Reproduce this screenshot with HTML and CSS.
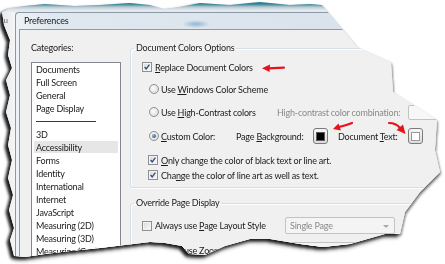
FILE: index.html
```html
<!DOCTYPE html>
<html>
<head>
    <title>Preferences</title>
    <link rel="stylesheet" href="styles.css">
</head>
<body>
<div class="page">
  <div class="sheet">
    <div class="bgwin">cu</div>
    <div class="dialog">
      <div class="titlebar">Preferences</div>
      <div class="client">
        <div class="cats">
          <div class="cats-label">Categories:</div>
          <ul class="listbox">
            <li>Documents</li>
            <li>Full Screen</li>
            <li>General</li>
            <li>Page Display</li>
            <li class="sep"><hr></li>
            <li>3D</li>
            <li class="sel">Accessibility</li>
            <li>Forms</li>
            <li>Identity</li>
            <li>International</li>
            <li>Internet</li>
            <li>JavaScript</li>
            <li>Measuring (2D)</li>
            <li>Measuring (3D)</li>
            <li>Measuring (Geo)</li>
          </ul>
        </div>
        <div class="panel">
          <fieldset class="group group-colors">
            <legend>Document Colors Options</legend>
            <div class="row row-replace">
              <span class="check on"><svg viewBox="0 0 10 10"><path d="M2 5 L4 7.5 L8 2"/></svg></span>
              <span><u>R</u>eplace Document Colors</span>
            </div>
            <div class="row row-sub row-win">
              <span class="radio"></span>
              <span>Use <u>W</u>indows Color Scheme</span>
            </div>
            <div class="row row-sub row-hc">
              <span class="radio"></span>
              <span class="opt-hc">Use <u>H</u>igh-Contrast colors</span>
              <span class="muted">High-contrast color combination:</span>
              <span class="combo combo-hc"></span>
            </div>
            <div class="row row-sub row-custom">
              <span class="radio on"></span>
              <span class="opt-custom"><u>C</u>ustom Color:</span>
              <span class="opt-bg">Page <u>B</u>ackground:</span>
              <span class="swatch"><i class="black"></i></span>
              <span class="opt-text">Document <u>T</u>ext:</span>
              <span class="swatch"><i class="white"></i></span>
            </div>
            <div class="row row-sub row-only">
              <span class="check on"><svg viewBox="0 0 10 10"><path d="M2 5 L4 7.5 L8 2"/></svg></span>
              <span><u>O</u>nly change the color of black text or line art.</span>
            </div>
            <div class="row row-sub row-change">
              <span class="check on"><svg viewBox="0 0 10 10"><path d="M2 5 L4 7.5 L8 2"/></svg></span>
              <span>Cha<u>n</u>ge the color of line art as well as text.</span>
            </div>
          </fieldset>
          <fieldset class="group group-override">
            <legend>Override Page Display</legend>
            <div class="row row-layout">
              <span class="check"></span>
              <span class="opt-layout">Always use <u>P</u>age Layout Style</span>
              <span class="combo">Single Page</span>
            </div>
            <div class="row row-zoom">
              <span class="check"></span>
              <span class="opt-layout">Always use <u>Z</u>oom Setting</span>
              <span class="combo">Fit Width</span>
            </div>
          </fieldset>
        </div>
      </div>
    </div>
    <svg class="marks" width="445" height="264" viewBox="0 0 445 264">
      <path d="M284 67.6 L268 68.3"/>
      <polygon points="262,68.2 270,64.4 269.6,72"/>
      <path d="M352 123 Q346 125.5 339 127"/>
      <polygon points="333,129 338.5,123.5 341,130.5"/>
      <path d="M389 123 Q396 123 400 128"/>
      <polygon points="405.5,134 396.5,130 403,124.5"/>
    </svg>
  </div>
</div>
</body>
</html>
```

FILE: styles.css
```css
html, body{
    margin: 0;
    padding: 0;
    background: #fff;
}
body{
    width: 445px;
    height: 264px;
    overflow: hidden;
    font-family: Lato, "Open Sans", sans-serif;
    font-size: 9px;
    letter-spacing: -0.2px;
    color: #1b1b1b;
}
u{
    text-decoration-thickness: 1px;
    text-underline-offset: 1px;
}
.page{
    filter: drop-shadow(-3px 2px 1.5px rgba(0,0,0,.85)) drop-shadow(1px 2px 1px rgba(0,0,0,.45));
}
.sheet{
    position: relative;
    width: 445px;
    height: 264px;
    display: flex;
    padding-top: 12px;
    box-sizing: border-box;
    overflow: hidden;
    background: linear-gradient(#2a7888 0, #2f8494 4px, #b9c9d3 7px, #e3e8ec 10px, #eceef0 30px);
    clip-path: polygon(2px 12px, 10px 8px, 25px 6px, 45px 4px, 75px 6px, 100px 5px, 130px 3px, 150px 5px, 165px 9px, 180px 7px, 200px 3px, 230px 5px, 260px 2px, 290px 5px, 310px 4px, 322px 5px,
        357px 47px, 391px 62px, 393px 92px, 437px 120px, 435px 150px, 440px 172px, 420px 192px, 405px 212px, 400px 234px,
        385px 234px, 350px 244px, 323px 247px, 300px 244px, 270px 239px, 250px 239px, 225px 246px, 205px 255px, 189px 254px, 182px 246px, 165px 243px, 150px 242px, 125px 245px, 100px 248px, 70px 251px, 45px 254px, 25px 257px, 14px 256px,
        10px 240px, 14px 228px, 9px 210px, 13px 195px, 8px 178px, 12px 160px, 8px 145px, 11px 128px, 6px 112px, 10px 95px, 6px 80px, 12px 68px, 8px 55px, 10px 40px, 4px 25px);
}
.bgwin{
    width: 15px;
    flex: none;
    padding-top: 3px;
    color: #6a6a6a;
    font-size: 8px;
    background: linear-gradient(90deg, #e6e8ea, #f4f5f6);
}
.dialog{
    flex: none;
    width: 460px;
    border-left: 1px solid #8c98a5;
    border-top: 1px solid #8c98a5;
    border-top-left-radius: 4px;
    padding-left: 3px;
    background: linear-gradient(90deg, #eef2f6, #dfe7ef 40px, #d8e1ea);
    display: flex;
    flex-direction: column;
}
.titlebar{
    height: 17px;
    line-height: 16px;
    padding-left: 5px;
    color: #1a1a1a;
    background: radial-gradient(ellipse 14px 4px at 177px 11px, rgba(90,140,190,.55), rgba(90,140,190,0));
}
.client{
    flex: 1;
    border-left: 1px solid #8f9aa6;
    border-top: 1px solid #8f9aa6;
    background: #f0f0f0;
    display: flex;
    gap: 9px;
    padding: 12px 0 0 11px;
}
.cats{
    width: 90px;
    flex: none;
}
.cats-label{
    height: 12px;
    line-height: 12px;
    margin-bottom: 8px;
}
.listbox{
    list-style: none;
    margin: 0;
    padding: 0 2px;
    height: 220px;
    background: #fff;
    border: 1px solid #828790;
}
.listbox li{
    height: 13px;
    line-height: 13px;
    padding-left: 2px;
    white-space: nowrap;
}
.listbox li.sel{
    background: #e6e6e6;
    height: 12px;
    margin-bottom: 1px;
}
.listbox li.sep{
    padding: 6px 0 0 2px;
    height: 7px;
}
.listbox li.sep hr{
    margin: 0;
    width: 60px;
    border: 0;
    border-top: 1px solid #3a3a3a;
}
.panel{
    flex: none;
    width: 330px;
}
.group{
    margin: 0;
    padding: 0 0 6px 0;
    border: 1px solid #d5dfe5;
    border-radius: 3px;
    box-shadow: inset 1px 1px 0 #fff, 1px 1px 0 #fff;
}
.group legend{
    margin-left: 3px;
    padding: 0 2px;
    height: 12px;
    line-height: 12px;
}
.row{
    display: flex;
    align-items: center;
    height: 12px;
    padding-left: 11px;
    white-space: nowrap;
}
.row-sub{
    padding-left: 17px;
}
.row-replace{ margin-top: 7px; }
.row-win{ margin-top: 10px; }
.row-hc{ margin-top: 11px; }
.row-custom{ margin-top: 12px; }
.row-only{ margin-top: 12px; }
.row-change{ margin-top: 3px; }
.row-win, .row-hc, .row-custom{
    padding-left: 18px;
}
.check{
    width: 8px;
    height: 8px;
    flex: none;
    margin-right: 3px;
    border: 1px solid #8e8f8f;
    background: linear-gradient(135deg, #d8d8d8, #fbfbfb);
    box-shadow: inset 0 0 0 1px #f3f3f3;
}
.check svg{
    display: block;
    width: 8px;
    height: 8px;
    fill: none;
    stroke: #2c4a86;
    stroke-width: 1.6;
}
.radio{
    width: 8px;
    height: 8px;
    flex: none;
    margin-right: 2px;
    border: 1px solid #8e8f8f;
    border-radius: 50%;
    background: radial-gradient(circle at 40% 40%, #fdfdfd, #d4d4d4);
    display: flex;
    align-items: center;
    justify-content: center;
}
.radio.on::after{
    content: "";
    width: 4px;
    height: 4px;
    border-radius: 50%;
    background: radial-gradient(circle at 35% 35%, #8fb0d6, #22456f);
}
.opt-hc{
    width: 116px;
}
.muted{
    color: #8a8a8a;
}
.opt-custom{
    width: 75px;
}
.opt-bg{
    width: 77px;
}
.opt-text{
    width: 70px;
    margin-left: 10px;
}
.swatch{
    flex: none;
    width: 13px;
    height: 14px;
    border: 1px solid #7a7a7a;
    border-radius: 3px;
    background: linear-gradient(#f6f6f6, #dcdcdc);
    display: flex;
    align-items: center;
    justify-content: center;
}
.swatch i{
    width: 7px;
    height: 7px;
    border: 1px solid #5a5a5a;
}
.swatch i.black{ background: #000; }
.swatch i.white{ background: #fff; border-color: #9a9a9a; }
.combo{
    flex: none;
    box-sizing: border-box;
    width: 110px;
    height: 17px;
    line-height: 15px;
    padding-left: 4px;
    border: 1px solid #c3c3c3;
    border-radius: 2px;
    background: #f4f4f4;
    color: #8a8a8a;
    position: relative;
}
.combo::after{
    content: "";
    position: absolute;
    right: 5px;
    top: 7px;
    border: 3px solid transparent;
    border-top: 3px solid #a8a8a8;
}
.combo-hc{
    margin-left: 8px;
    height: 15px;
    background: #f7f7f7;
}
.group-override{
    margin-top: 9px;
}
.row-layout{
    margin-top: 8px;
    height: 17px;
}
.row-zoom{
    margin-top: 8px;
    height: 17px;
}
.opt-layout{
    width: 130px;
}
.marks{
    position: absolute;
    left: 0;
    top: 0;
}
.marks path{
    fill: none;
    stroke: #e8121b;
    stroke-width: 2.2;
    stroke-linecap: round;
}
.marks polygon{
    fill: #e8121b;
}
```
